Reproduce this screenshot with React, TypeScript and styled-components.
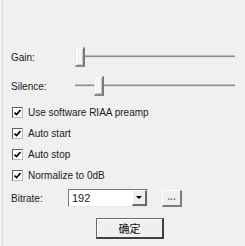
import React from "react";
import styled, { createGlobalStyle } from "styled-components";

const Global = createGlobalStyle`
  html, body { margin: 0; padding: 0; background: #f0f0f0; }
  body { width: 245px; height: 246px; overflow: hidden; }
`;

const Frame = styled.div`
  box-sizing: border-box;
  width: 243px;
  height: 246px;
  margin-left: 2px;
  border-left: 1px solid #d3dbe9;
  padding: 47px 0 0 8px;
  font-family: "Liberation Sans", Arial, "Noto Sans CJK SC", sans-serif;
  font-size: 10px;
  color: #1b1b1b;
  display: flex;
  flex-direction: column;
`;

const SliderRow = styled.div<{ $gap: number }>`
  display: flex;
  align-items: center;
  height: 20px;
  margin-bottom: ${(p) => p.$gap}px;
`;

const Label = styled.span`
  width: 64px;
  flex: none;
`;

const Track = styled.div`
  position: relative;
  width: 160px;
  height: 20px;
  &::before {
    content: "";
    position: absolute;
    left: 0;
    right: 0;
    top: 8px;
    height: 3px;
    background: linear-gradient(#bcbcbc 0 1px, #8e8e8e 1px 2px, #e2e2e2 2px 3px);
  }
`;

const Thumb = styled.div`
  position: absolute;
  top: 0;
  width: 10px;
  height: 20px;
  box-sizing: border-box;
  background: #f4f4f4;
  border-left: 1px solid #e8e8e8;
  border-top: 1px solid #e8e8e8;
  border-right: 2px solid #7a7a7a;
  border-bottom: 2px solid #8a8a8a;
  box-shadow: inset 1px 1px 0 #ffffff, inset -1px -1px 0 #c8c8c8;
`;

const CheckRow = styled.label`
  display: flex;
  align-items: center;
  height: 21px;
  padding-left: 1px;
`;

const Box = styled.span`
  box-sizing: border-box;
  width: 11px;
  height: 11px;
  border: 1px solid #5e5e5e;
  border-right-color: #bdbdbd;
  border-bottom-color: #bdbdbd;
  background: #ffffff;
  margin-right: 5px;
  display: flex;
  align-items: center;
  justify-content: center;
`;

const BitrateRow = styled.div`
  display: flex;
  align-items: center;
  height: 18px;
  margin-top: 3px;
`;

const BitLabel = styled.span`
  width: 57px;
  flex: none;
`;

const Combo = styled.div`
  box-sizing: border-box;
  width: 80px;
  height: 18px;
  display: flex;
  background: #ffffff;
  border-top: 1px solid #7a7a7a;
  border-left: 1px solid #7a7a7a;
  border-right: 1px solid #e6e6e6;
  border-bottom: 1px solid #e6e6e6;
`;

const ComboValue = styled.span`
  flex: 1;
  padding-left: 3px;
  line-height: 16px;
  font-size: 11px;
`;

const DropBtn = styled.div`
  box-sizing: border-box;
  width: 15px;
  height: 16px;
  background: #f0f0f0;
  border-left: 1px solid #ffffff;
  border-top: 1px solid #ffffff;
  border-right: 2px solid #6a6a6a;
  border-bottom: 2px solid #6a6a6a;
  display: flex;
  align-items: center;
  justify-content: center;
`;

const Arrow = styled.span`
  width: 0;
  height: 0;
  border-left: 3px solid transparent;
  border-right: 3px solid transparent;
  border-top: 3px solid #000000;
`;

const SmallBtn = styled.div`
  box-sizing: border-box;
  width: 20px;
  height: 17px;
  margin-left: 14px;
  background: #f0f0f0;
  border-left: 1px solid #ffffff;
  border-top: 1px solid #ffffff;
  border-right: 2px solid #7c7c7c;
  border-bottom: 2px solid #7c7c7c;
  font-size: 10px;
  font-weight: bold;
  color: #5a7aa8;
  display: flex;
  align-items: center;
  justify-content: center;
  padding-bottom: 2px;
`;

const OkBtn = styled.div`
  box-sizing: border-box;
  width: 68px;
  height: 21px;
  margin: 11px 0 0 85px;
  background: #efefef;
  border: 1px solid #6a6a6a;
  border-right-width: 2px;
  border-bottom-width: 2px;
  border-right-color: #404040;
  border-bottom-color: #404040;
  box-shadow: inset 1px 1px 0 #ffffff;
  display: flex;
  align-items: center;
  justify-content: center;
  font-size: 11px;
  font-family: "Noto Sans CJK SC", sans-serif;
  color: #111111;
`;

const Check = () => (
  <svg width="7" height="7" viewBox="0 0 7 7">
    <path d="M0.5 3.5 L2.5 5.5 L6.5 1" stroke="#000" strokeWidth="1.6" fill="none" />
  </svg>
);

const checks = ["Use software RIAA preamp", "Auto start", "Auto stop", "Normalize to 0dB"];

export default function App() {
  return (
    <>
      <Global />
      <Frame>
        <SliderRow $gap={9}>
          <Label>Gain:</Label>
          <Track>
            <Thumb style={{ left: 0 }} />
          </Track>
        </SliderRow>
        <SliderRow $gap={6}>
          <Label>Silence:</Label>
          <Track>
            <Thumb style={{ left: 19 }} />
          </Track>
        </SliderRow>
        {checks.map((c) => (
          <CheckRow key={c}>
            <Box>
              <Check />
            </Box>
            {c}
          </CheckRow>
        ))}
        <BitrateRow>
          <BitLabel>Bitrate:</BitLabel>
          <Combo>
            <ComboValue>192</ComboValue>
            <DropBtn>
              <Arrow />
            </DropBtn>
          </Combo>
          <SmallBtn>...</SmallBtn>
        </BitrateRow>
        <OkBtn>确定</OkBtn>
      </Frame>
    </>
  );
}
